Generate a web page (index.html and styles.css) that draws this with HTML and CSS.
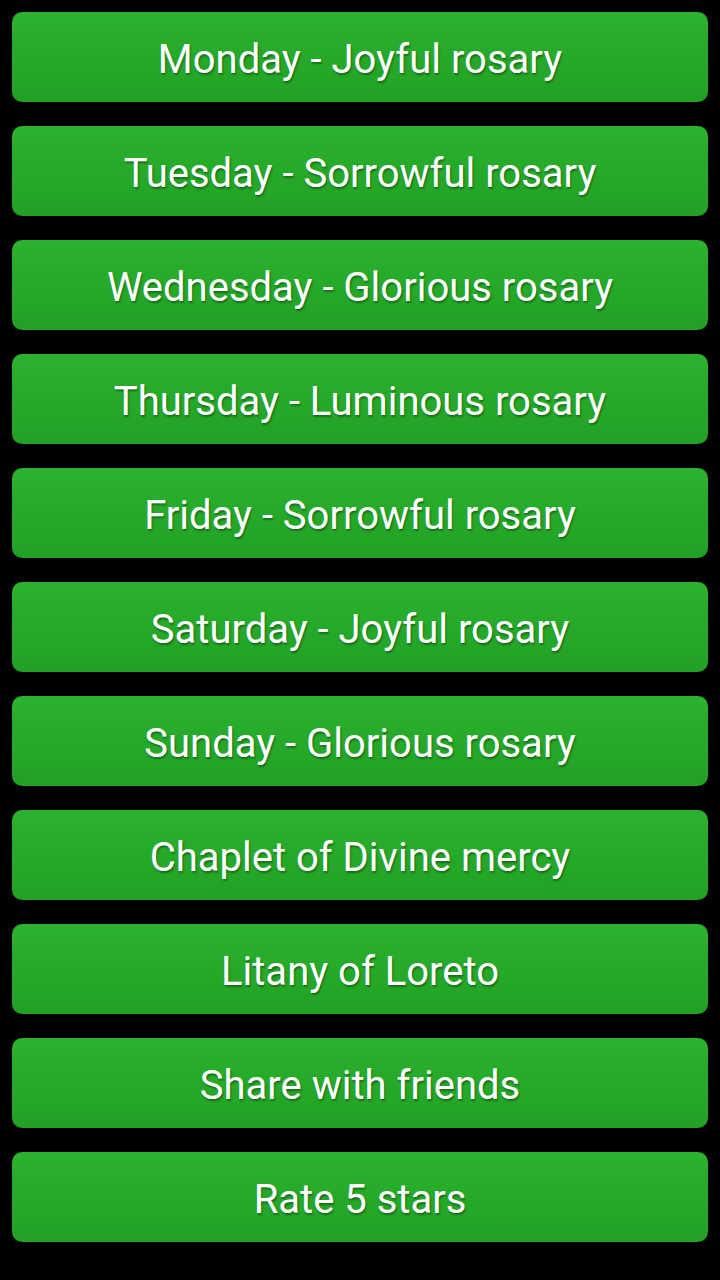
FILE: index.html
```html
<!DOCTYPE html>
<html>
<head>
<meta charset="utf-8">
<link rel="stylesheet" href="styles.css">
</head>
<body>
<div class="list">
  <div class="btn">Monday - Joyful rosary</div>
  <div class="btn">Tuesday - Sorrowful rosary</div>
  <div class="btn">Wednesday - Glorious rosary</div>
  <div class="btn">Thursday - Luminous rosary</div>
  <div class="btn">Friday - Sorrowful rosary</div>
  <div class="btn">Saturday - Joyful rosary</div>
  <div class="btn">Sunday - Glorious rosary</div>
  <div class="btn">Chaplet of Divine mercy</div>
  <div class="btn">Litany of Loreto</div>
  <div class="btn">Share with friends</div>
  <div class="btn">Rate 5 stars</div>
</div>
</body>
</html>
```
FILE: styles.css
```css
html, body {
  margin: 0;
  padding: 0;
  background: #000;
  width: 720px;
  height: 1280px;
  overflow: hidden;
}
.list {
  display: flex;
  flex-direction: column;
  gap: 24px;
  padding: 12px 12px;
}
.btn {
  box-sizing: border-box;
  height: 90px;
  padding-top: 4px;
  border-radius: 10px;
  background: linear-gradient(to bottom, #2bb22e 0%, #21a124 100%);
  color: #fff;
  font-family: Roboto, "Noto Sans", sans-serif;
  font-size: 40px;
  display: flex;
  align-items: center;
  justify-content: center;
  text-shadow: 1px 2px 2px rgba(0,0,0,0.35);
}
```
